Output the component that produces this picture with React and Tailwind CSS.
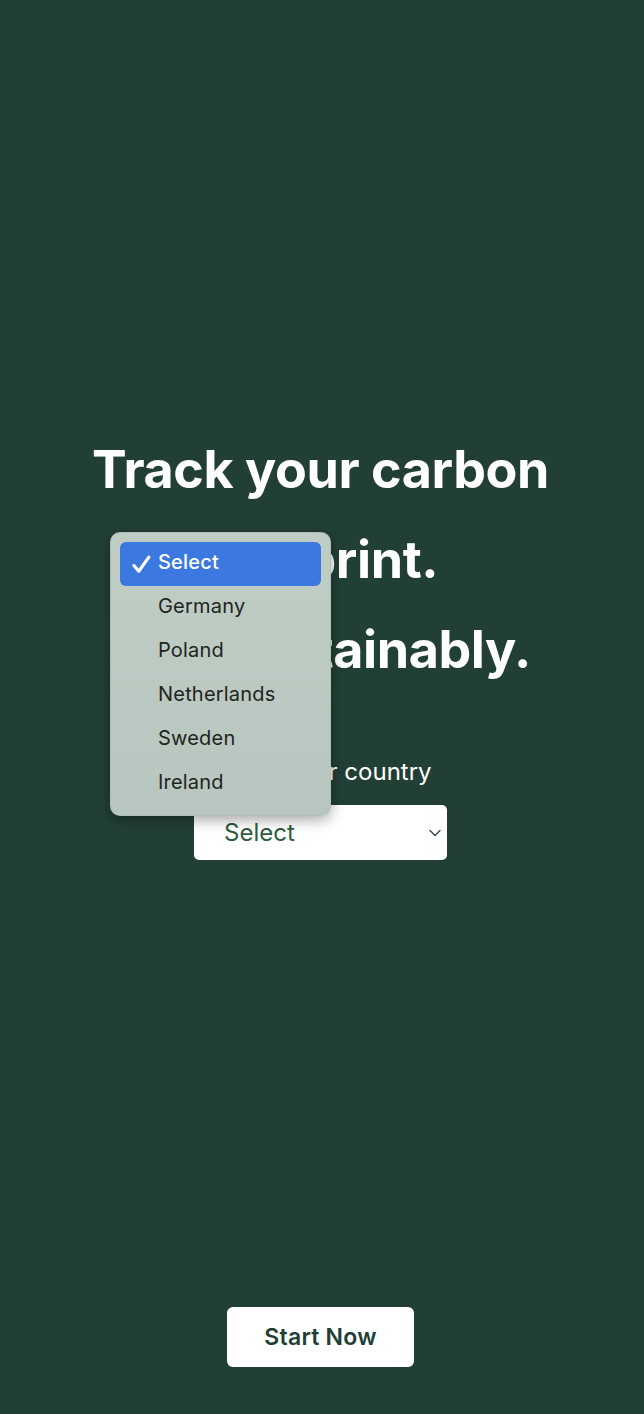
import { useState } from "react";

const countries = ["Select", "Germany", "Poland", "Netherlands", "Sweden", "Ireland"];

const Check = () => (
  <svg width="21" height="21" viewBox="0 0 20 20" fill="none">
    <path d="M2.8 11 L7.4 16.4 L17 3" stroke="white" strokeWidth="3" strokeLinecap="round" strokeLinejoin="round" />
  </svg>
);

const Chevron = () => (
  <svg width="12" height="8" viewBox="0 0 12 8" fill="none">
    <path d="M1 1.5 L6 6.5 L11 1.5" stroke="#3b4a42" strokeWidth="1.4" strokeLinecap="round" strokeLinejoin="round" />
  </svg>
);

const App = () => {
  const [country] = useState("Select");

  return (
    <div
      className="relative flex flex-col items-center w-full h-[1414px] pr-[3px] bg-[#223f36] text-white overflow-hidden"
      style={{ fontFamily: "Inter, 'Noto Sans', sans-serif" }}
    >
      {/* Hero */}
      <div className="flex flex-col items-center pt-[425px]">
        <h1 className="text-center text-[52px] font-bold leading-[90px] tracking-[-0.008em]">
          Track your carbon
          <br />
          footprint.
          <br />
          Live sustainably.
        </h1>

        <label className="mt-[61px] text-[24px] leading-[32px]">Select your country</label>

        <div className="mt-[17px] w-[253px] h-[55px] bg-white rounded-[5px] flex items-center justify-between pl-[30px] pr-[6px]">
          <span className="text-[24px] text-[#2e5b41]">{country}</span>
          <Chevron />
        </div>
      </div>

      {/* Start button */}
      <div className="mt-auto pb-[47px]">
        <button className="w-[187px] h-[60px] bg-white rounded-[6px] text-[23px] font-semibold tracking-[0.01em] text-[#223f36]">
          Start Now
        </button>
      </div>

      {/* Open native select menu */}
      <div className="absolute left-[110px] top-[532px] w-[221px] rounded-[10px] bg-gradient-to-b from-[#bfcdc5] to-[#b7c6be] shadow-[0_4px_14px_rgba(0,0,0,0.35)] border border-[#a9b8b0]/60 p-[9px]">
        {countries.map((c) => (
          <div
            key={c}
            className={
              c === country
                ? "flex items-center h-[44px] rounded-[6px] bg-[#3b78e0] text-white"
                : "flex items-center h-[44px] text-[#1f2421]"
            }
          >
            <span className="w-[38px] flex justify-end pr-[6px]">{c === country && <Check />}</span>
            <span className={(c === country ? "font-medium " : "") + "text-[20px] tracking-[0.01em] pb-[4px]"}>{c}</span>
          </div>
        ))}
      </div>
    </div>
  );
};

export default App;
